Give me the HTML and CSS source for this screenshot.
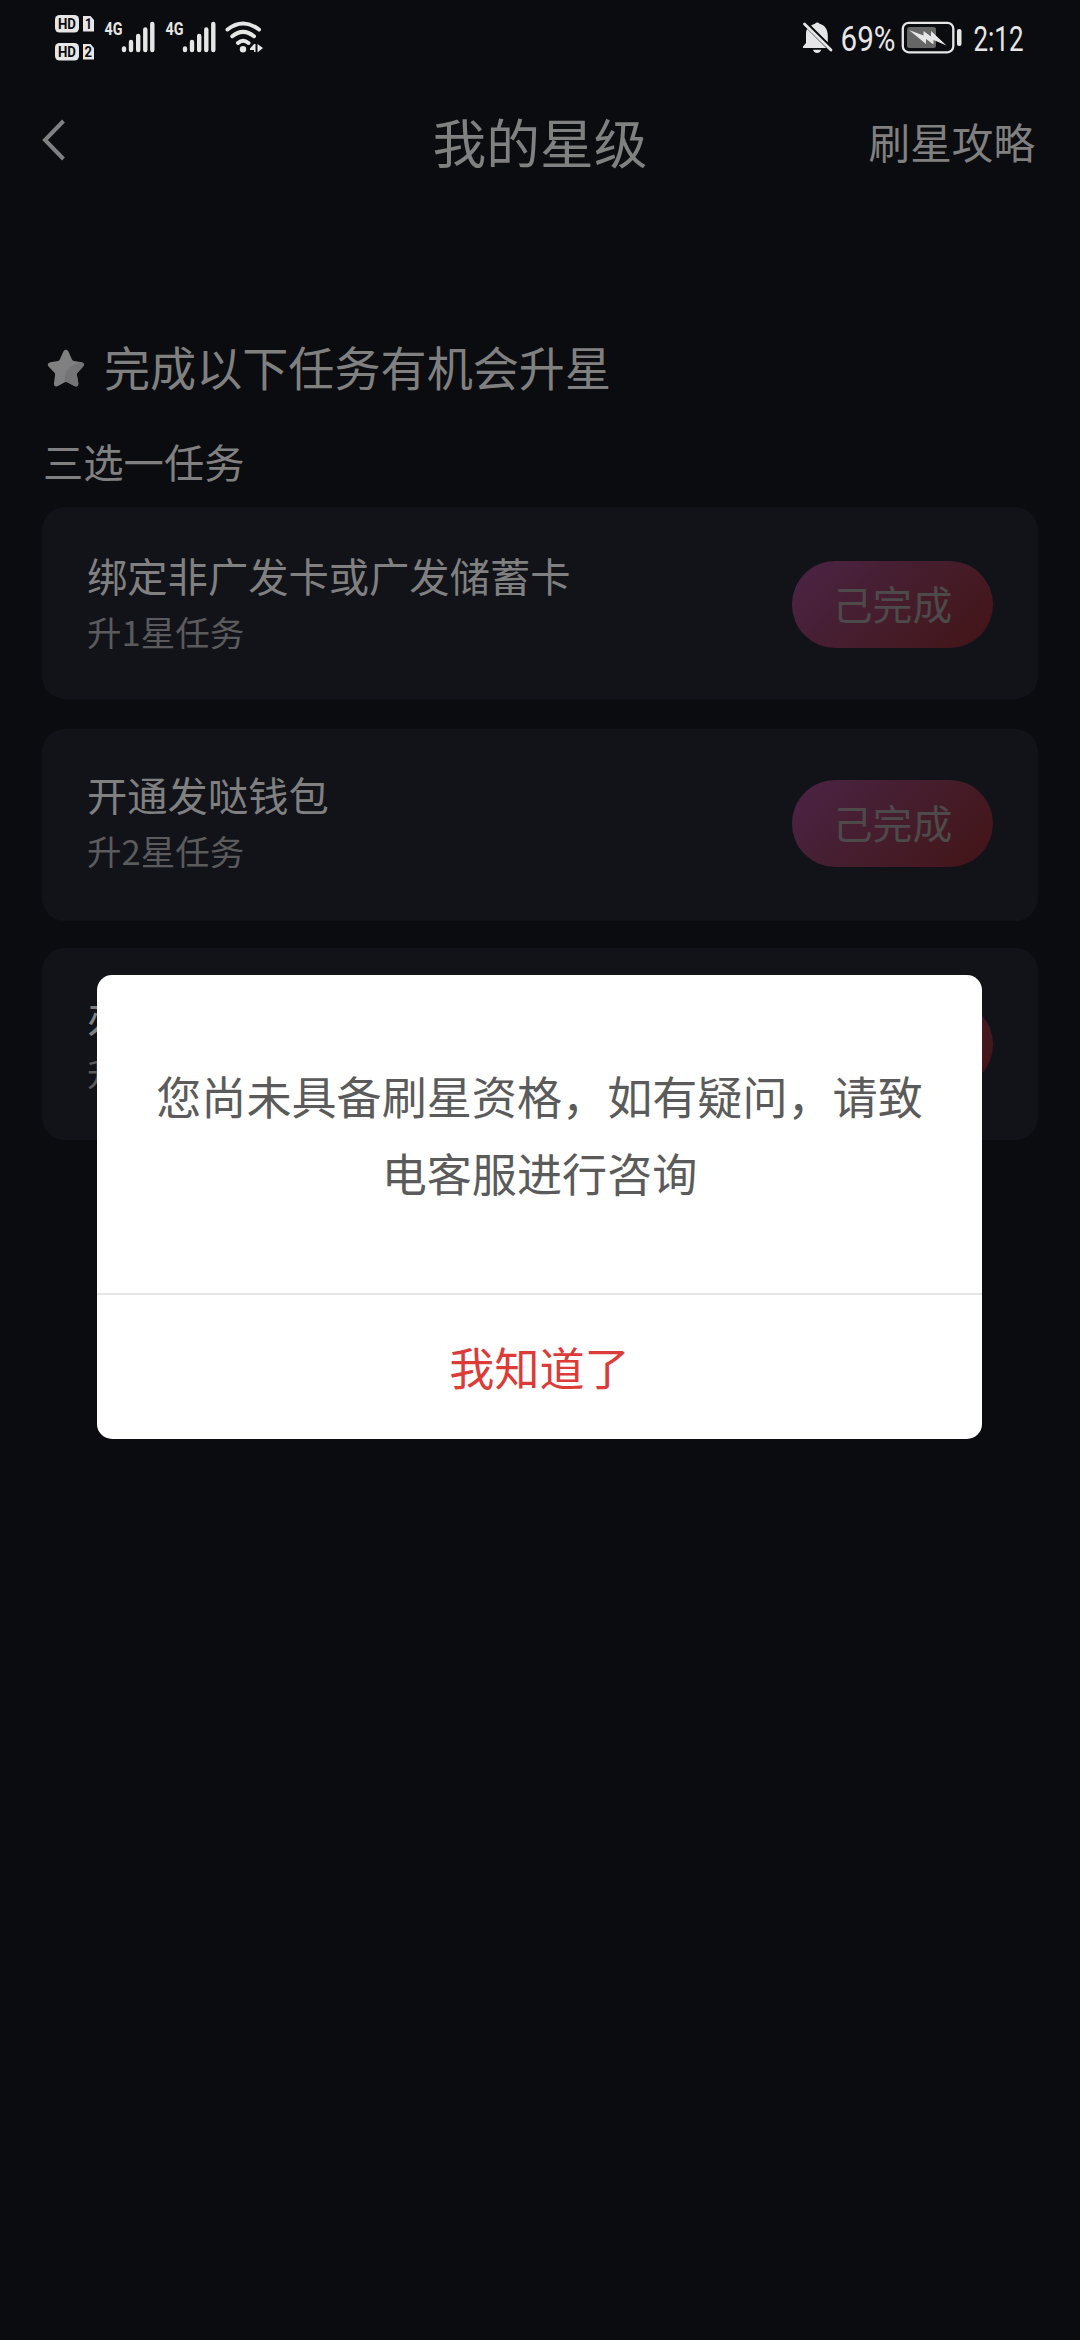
FILE: index.html
```html
<!DOCTYPE html>
<html lang="zh-CN">
<head>
<meta charset="utf-8">
<title>我的星级</title>
<link rel="stylesheet" href="styles.css">
</head>
<body>
<div class="screen">
  <div class="status">
    <svg class="status-left" width="240" height="80" viewBox="0 0 240 80" fill="#e6e6e6">
      <rect x="15" y="15" width="24" height="17.500" rx="4.500"/>
      <path d="M43 16h7.500l3.500 4v11.500h-11z"/>
      <rect x="15" y="43" width="24" height="17.500" rx="4.500"/>
      <path d="M43 44h7.500l3.500 4v11.500h-11z"/>
      <g class="badge">
        <text x="18" y="29.300" textLength="18" lengthAdjust="spacingAndGlyphs">HD</text>
        <text x="45" y="29.300" textLength="7" lengthAdjust="spacingAndGlyphs">1</text>
        <text x="18" y="57.300" textLength="18" lengthAdjust="spacingAndGlyphs">HD</text>
        <text x="44.500" y="57.300" textLength="7.500" lengthAdjust="spacingAndGlyphs">2</text>
      </g>
      <g class="net">
        <text x="64.500" y="35.300" textLength="18" lengthAdjust="spacingAndGlyphs">4G</text>
        <text x="125.500" y="35.300" textLength="18" lengthAdjust="spacingAndGlyphs">4G</text>
      </g>
      <g stroke="#e6e6e6" stroke-width="4.400" stroke-linecap="round">
        <path d="M84 48.500v1.600M91 42v8.100M98.200 36v14.100M105.300 29.500v20.600M112.300 24v26.100"/>
        <path d="M145 48.500v1.600M152 42v8.100M159.200 36v14.100M166.300 29.500v20.600M173.300 24v26.100"/>
      </g>
      <g fill="none" stroke="#e6e6e6" stroke-width="4" stroke-linecap="round">
        <path d="M187.500 29.500Q203 17.500 219 29.500M192.300 36.200Q203 27.500 214 36.200M198 43Q203 38.500 208.500 43"/>
      </g>
      <circle cx="203" cy="49.300" r="3.200"/>
      <path d="M215.500 44v8h-1.500v-2h-4v-1.500l4-4.500zM217.500 44v8.500l5.500-4.500z"/>
    </svg>
    <svg class="status-right" width="260" height="80" viewBox="0 0 260 80" fill="#e6e6e6">
      <path d="M35 23.800a2.600 2.600 0 0 1 4.500 0c6 1.500 8.300 6.500 8.300 12v6.400L31 25.500q2-1.300 4-1.700zM27.200 29l19 19H23v-1.500l3-3.500V33q0-2.500 1.200-4zM33 49.700h8.200q-1.200 3.300-4.100 3.300t-4.100-3.300z"/>
      <path d="M24.500 24L51 50" stroke="#e6e6e6" stroke-width="2.800" stroke-linecap="round"/>
      <text class="time" x="60.500" y="51" textLength="55" lengthAdjust="spacingAndGlyphs">69%</text>
      <rect x="122.800" y="22.800" width="50.500" height="29.500" rx="6" fill="none" stroke="#e6e6e6" stroke-width="2.300"/>
      <rect x="127" y="27" width="29" height="21" rx="2.500" fill="#666"/>
      <path d="M129 30l14.500 5.500v-4.500l7.500 5.500v-5.500l15.500 14.500-13-5.500v4.500l-7.500-5.500v5z"/>
      <rect x="177" y="29" width="4.500" height="17" rx="2"/>
      <text class="time" x="193.500" y="51" textLength="50" lengthAdjust="spacingAndGlyphs">2:12</text>
    </svg>
  </div>
  <header class="nav">
    <svg class="back" width="28" height="44" viewBox="0 0 28 44"><path d="M23.500 2L5 21l18.500 19" fill="none" stroke="#808080" stroke-width="4"/></svg>
    <h1 class="nav-title">我的星级</h1>
    <span class="nav-link">刷星攻略</span>
  </header>
  <main class="content">
    <div class="heading">
      <svg width="38" height="38" viewBox="0 0 38 38"><path d="M16.500 2.200Q19 -.5 21.300 2.200L25 10.500Q25.500 11.600 27 12L34.500 13.200Q39 14.500 35.700 18L30.500 23.700Q29.700 24.700 29.900 26L31.300 34Q31.500 38.500 27.300 37L20.300 33.200Q19 32.600 17.700 33.200L11 37Q6.800 38.500 7 34L8.100 26Q8.300 24.700 7.500 23.700L2 18Q-1 14.500 3.200 13.200L11 12Q12.200 11.700 12.800 10.500Z" fill="#808080"/><path d="M36.500 13.900Q38 15.500 35.700 18L30.500 23.700Q29.700 24.700 29.900 26L31.300 34Q31.500 38.500 27.300 37L20.300 33.200Q19 32.600 17.700 33.200Q16 17 34.500 13.200Z" fill="#747476"/></svg>
      <span class="heading-text">完成以下任务有机会升星</span>
    </div>
    <div class="group">三选一任务</div>
    <section class="card card-first">
      <div class="info"><div class="name">绑定非广发卡或广发储蓄卡</div><div class="sub">升1星任务</div></div>
      <div class="done">己完成</div>
    </section>
    <section class="card card-second">
      <div class="info"><div class="name">开通发哒钱包</div><div class="sub">升2星任务</div></div>
      <div class="done">己完成</div>
    </section>
    <section class="card">
      <div class="info"><div class="name">办</div><div class="sub">升</div></div>
      <div class="done"></div>
    </section>
  </main>
  <div class="dialog">
    <p class="message">您尚未具备刷星资格，如有疑问，请致电客服进行咨询</p>
    <div class="confirm">我知道了</div>
  </div>
</div>
</body>
</html>
```
FILE: styles.css
```css
* { box-sizing: border-box; }
body { margin: 0; background: #0b0c0f; }
.screen {
  position: relative;
  width: 1080px;
  height: 2340px;
  overflow: hidden;
  background: #0b0c0f;
  color: #808080;
  font-family: "Noto Sans CJK SC", sans-serif;
}
.status { display: flex; justify-content: space-between; height: 80px; padding: 0 40px; }
.badge { fill: #0b0c0f; font: 700 15.5px Roboto, sans-serif; }
.net { font: 700 18.5px Roboto, sans-serif; }
.time { font: 400 34.5px Roboto, sans-serif; }
.nav {
  display: grid;
  grid-template-columns: 1fr auto 1fr;
  align-items: center;
  height: 124px;
  padding: 0 45px 2px 40px;
}
.back { display: block; }
.nav-title { margin: 0 -5px 0 0; font-size: 53.7px; line-height: 80px; font-weight: 400; }
.nav-link { justify-self: end; font-size: 41.6px; line-height: 60px; }
.content { padding: 133px 42px 0; }
.heading { display: flex; align-items: center; height: 62px; padding-left: 5px; gap: 20px; font-size: 46.1px; line-height: 62px; }
.heading-text { padding-bottom: 5px; margin-left: -1px; }
.group { margin-top: 34px; height: 74px; padding-left: 1px; font-size: 40.3px; line-height: 56px; }
.card {
  display: flex;
  justify-content: space-between;
  align-items: center;
  height: 192px;
  margin-bottom: 27px;
  padding: 0 45px;
  border-radius: 23px;
  background: #121318;
}
.card-first { margin-bottom: 30px; padding-top: 3px; }
.card-second { padding-bottom: 3px; }
.info { padding-bottom: 7px; }
.name { font-size: 40.3px; line-height: 60px; }
.sub { font-size: 34.5px; line-height: 52px; color: #5b5b5d; }
.done {
  width: 201px;
  height: 87px;
  border-radius: 44px;
  background: linear-gradient(135deg, #4b2446 0%, #451d2c 50%, #431416 100%);
  color: #4d4a4c;
  font-size: 39.8px;
  line-height: 84px;
  text-align: center;
}
.dialog {
  position: absolute;
  left: 97px;
  top: 975px;
  width: 885px;
  height: 464px;
  border-radius: 15px;
  background: #fff;
  text-align: center;
}
.message {
  height: 320px;
  margin: 0;
  padding: 82px 55px 0;
  border-bottom: 2px solid #e5e5e5;
  color: #5b5b5b;
  font-size: 45.1px;
  line-height: 77px;
}
.confirm { height: 144px; color: #dc3b38; font-size: 45.1px; line-height: 144px; }
```
